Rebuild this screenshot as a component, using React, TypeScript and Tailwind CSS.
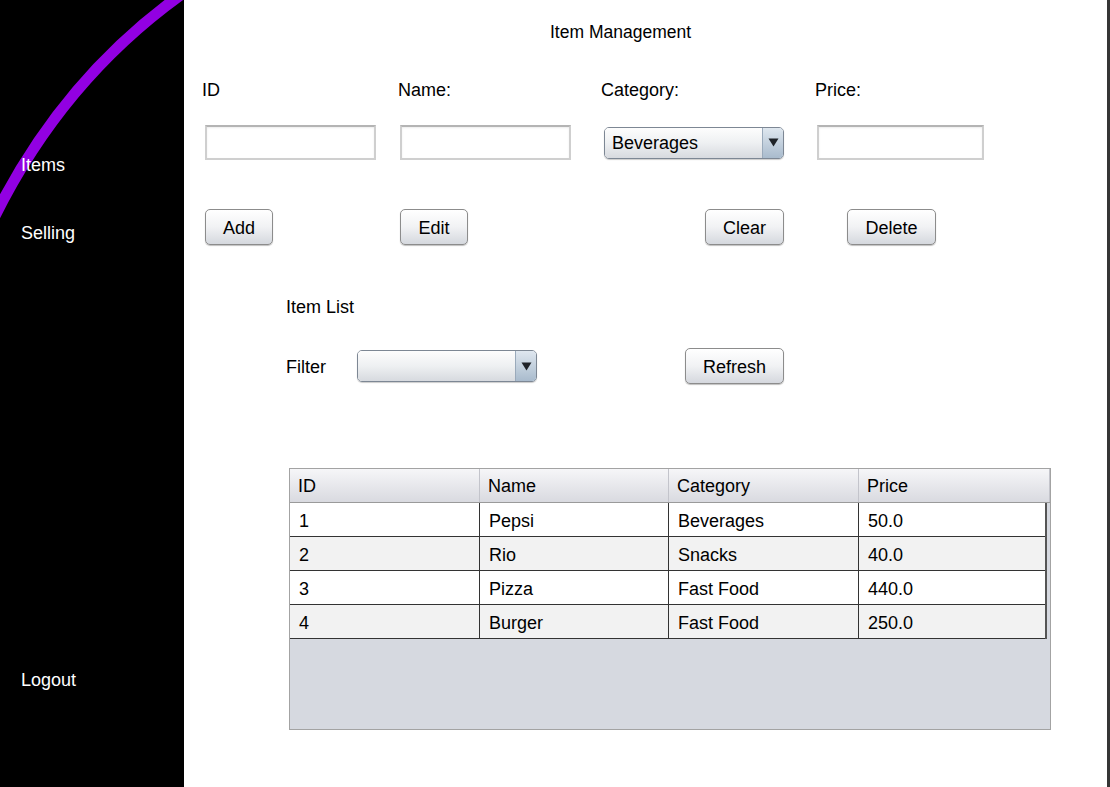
import React from 'react'

const font = { fontFamily: '"Liberation Sans", Arial, sans-serif' }

function SwingButton({ label, width }: { label: string; width: string }) {
  return (
    <button
      className={`${width} h-[36px] pt-[2px] rounded-[5px] border border-[#8c8c8c] bg-gradient-to-b from-[#ffffff] via-[#f1f2f4] to-[#d5d8de] text-[18px] text-black shadow-[0_1px_1px_rgba(0,0,0,0.25)]`}
    >
      {label}
    </button>
  )
}

function Combo({ value, width }: { value?: string; width: string }) {
  return (
    <div
      className={`${width} h-[32px] flex rounded-[5px] border border-[#7d8794] overflow-hidden shadow-[0_1px_1px_rgba(0,0,0,0.2)]`}
    >
      <div className="flex-1 flex items-center pl-[7px] pt-[2px] bg-gradient-to-b from-[#fdfdfd] via-[#eef0f2] to-[#d7dadf] text-[18px] text-black">
        {value}
      </div>
      <div className="w-[21px] flex items-center justify-center border-l border-[#9aaabb] bg-gradient-to-b from-[#dfe7ef] to-[#a9bbcd]">
        <svg width="11" height="9" viewBox="0 0 11 9">
          <path d="M0.5 0.5 L10.5 0.5 L5.5 8.5 Z" fill="#1f2328" />
        </svg>
      </div>
    </div>
  )
}

function TextBox({ width }: { width: string }) {
  return (
    <div
      className={`${width} h-[35px] bg-white border-2 border-[#cfcfcf] border-t-[#b4b4b4] shadow-[inset_0_1px_2px_rgba(0,0,0,0.08)]`}
    />
  )
}

const rows = [
  ['1', 'Pepsi', 'Beverages', '50.0'],
  ['2', 'Rio', 'Snacks', '40.0'],
  ['3', 'Pizza', 'Fast Food', '440.0'],
  ['4', 'Burger', 'Fast Food', '250.0'],
]

const colWidths = ['w-[190px]', 'w-[189px]', 'w-[190px]', 'flex-1']

export default function App() {
  return (
    <div className="w-[1110px] h-[787px] flex bg-white overflow-hidden" style={font}>
      {/* Sidebar */}
      <div className="relative w-[184px] h-full bg-black text-white text-[18px] flex flex-col">
        <svg className="absolute left-0 top-0" width="184" height="230" viewBox="0 0 184 230">
          <path d="M182 -6 Q 62 80 -6 218" stroke="#9200e2" strokeWidth="11" fill="none" />
        </svg>
        <div className="relative pl-[21px] pt-[154px] leading-[22px]">Items</div>
        <div className="relative pl-[21px] pt-[46px] leading-[22px]">Selling</div>
        <div className="relative pl-[21px] mt-auto mb-[96px] leading-[22px]">Logout</div>
      </div>

      {/* Main panel */}
      <div className="flex-1 flex flex-col text-black text-[18px]">
        <div className="pl-[366px] pt-[21px] leading-[22px] text-[17.5px]">Item Management</div>

        <div className="flex pl-[18px] pt-[36px] leading-[22px]">
          <div className="w-[196px]">ID</div>
          <div className="w-[203px]">Name:</div>
          <div className="w-[214px]">Category:</div>
          <div>Price:</div>
        </div>

        <div className="flex items-center pl-[21px] pt-[24px] h-[59px]">
          <TextBox width="w-[171px]" />
          <div className="w-[24px]" />
          <TextBox width="w-[171px]" />
          <div className="w-[33px]" />
          <Combo value="Beverages" width="w-[180px]" />
          <div className="w-[33px]" />
          <TextBox width="w-[167px]" />
        </div>

        <div className="flex pl-[21px] pt-[49px]">
          <SwingButton label="Add" width="w-[68px]" />
          <div className="w-[127px]" />
          <SwingButton label="Edit" width="w-[68px]" />
          <div className="w-[237px]" />
          <SwingButton label="Clear" width="w-[79px]" />
          <div className="w-[63px]" />
          <SwingButton label="Delete" width="w-[89px]" />
        </div>

        <div className="pl-[102px] pt-[51px] leading-[22px]">Item List</div>

        <div className="flex items-center pl-[102px] pt-[30px]">
          <div className="w-[71px] pt-[2px] leading-[22px]">Filter</div>
          <Combo width="w-[180px]" />
          <div className="w-[148px]" />
          <SwingButton label="Refresh" width="w-[99px]" />
        </div>

        {/* Table */}
        <div className="ml-[105px] mt-[84px] w-[762px] h-[262px] border border-[#a3a3a3] bg-[#d6d9e0] flex flex-col">
          <div className="flex h-[34px] bg-gradient-to-b from-[#f6f6f8] to-[#d9dae0] border-b border-[#9a9a9a]">
            {['ID', 'Name', 'Category', 'Price'].map((h, i) => (
              <div
                key={h}
                className={`${colWidths[i]} flex items-center pl-[8px] pt-[2px] border-r border-[#c3c4cb]`}
              >
                {h}
              </div>
            ))}
          </div>
          <div className="w-[757px] border-r-2 border-[#555]">
            {rows.map((r, ri) => (
              <div
                key={ri}
                className={`flex h-[34px] border-b border-[#333] ${ri % 2 === 1 ? 'bg-[#f2f2f2]' : 'bg-white'}`}
              >
                {r.map((c, ci) => (
                  <div
                    key={ci}
                    className={`${colWidths[ci]} flex items-center pl-[9px] pt-[3px] ${ci < 3 ? 'border-r border-[#333]' : ''}`}
                  >
                    {c}
                  </div>
                ))}
              </div>
            ))}
          </div>
        </div>
      </div>

      {/* Right edge strip */}
      <div className="w-[3px] h-full bg-[#353535]" />
    </div>
  )
}
